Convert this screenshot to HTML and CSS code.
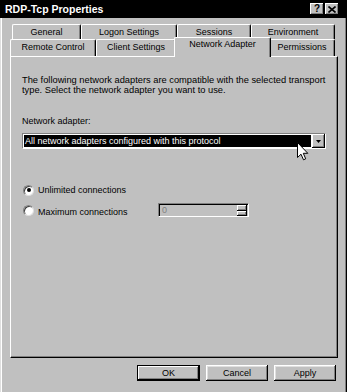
FILE: index.html
```html
<!DOCTYPE html>
<html>
<head>
<meta charset="utf-8">
<link rel="stylesheet" href="styles.css">
</head>
<body>
<div class="window">
  <div class="titlebar">
    <span class="title">RDP-Tcp Properties</span>
    <span class="tbtn help">?</span>
    <span class="tbtn close"><svg width="8" height="7" viewBox="0 0 8 7"><path d="M0.5 0.5 L7.5 6.5 M7.5 0.5 L0.5 6.5" stroke="#000" stroke-width="1.6"/></svg></span>
  </div>
  <div class="frame">
    <div class="tabs">
      <div class="tabrow back">
        <div class="tab t-general">General</div>
        <div class="tab t-logon">Logon Settings</div>
        <div class="tab t-sessions">Sessions</div>
        <div class="tab t-env">Environment</div>
      </div>
      <div class="tabrow front">
        <div class="tab t-remote">Remote Control</div>
        <div class="tab t-client">Client Settings</div>
        <div class="tab t-network active">Network Adapter</div>
        <div class="tab t-perm">Permissions</div>
      </div>
    </div>
    <div class="panel">
      <p class="desc">The following network adapters are compatible with the selected transport<br>type. Select the network adapter you want to use.</p>
      <div class="label">Network adapter:</div>
      <div class="combo">
        <div class="combo-field">All network adapters configured with this protocol</div>
        <div class="combo-btn"><svg width="5" height="3" viewBox="0 0 5 3"><path d="M0 0 H5 L2.5 3 Z" fill="#000"/></svg></div>
      </div>
      <div class="radios">
        <div class="radio-row">
          <span class="radio checked"></span>
          <span class="rlabel">Unlimited connections</span>
        </div>
        <div class="radio-row">
          <span class="radio"></span>
          <span class="rlabel low">Maximum connections</span>
          <div class="spin">
            <span class="spin-val">0</span>
            <span class="spin-btns">
              <span class="sbtn"></span>
              <span class="sbtn"></span>
            </span>
          </div>
        </div>
      </div>
    </div>
    <div class="buttons">
      <div class="btn default">OK</div>
      <div class="btn">Cancel</div>
      <div class="btn">Apply</div>
    </div>
  </div>
  <svg class="cursor" width="12" height="19" viewBox="0 0 12 19"><path d="M0.5 0.5 L0.5 15.5 L4 12.2 L6.5 17.8 L8.7 16.8 L6.3 11.3 L10.8 11.3 Z" fill="#fff" stroke="#000" stroke-width="1"/></svg>
</div>
</body>
</html>
```

FILE: styles.css
```css
* { box-sizing: border-box; }
html, body { margin: 0; padding: 0; }
body {
  width: 347px;
  height: 392px;
  overflow: hidden;
  background: #c0c0c0;
  font-family: "Liberation Sans", Arial, sans-serif;
  font-size: 9px;
  color: #000;
}
.window {
  position: relative;
  width: 347px;
  height: 392px;
  display: flex;
  flex-direction: column;
  background: #c0c0c0;
}
.titlebar {
  height: 18px;
  flex: none;
  background: #000;
  display: flex;
  align-items: center;
  padding: 0 8px 0 5px;
  gap: 1px;
}
.title {
  flex: 1;
  color: #fff;
  font-weight: bold;
  font-size: 10.5px;
  line-height: 12px;
}
.tbtn {
  width: 14px;
  height: 12px;
  background: #c0c0c0;
  box-shadow: inset -1px -1px #000, inset 1px 1px #fff, inset -2px -2px #808080;
  display: flex;
  align-items: center;
  justify-content: center;
  font-weight: bold;
  font-size: 10px;
  line-height: 10px;
}
.frame {
  flex: 1;
  display: flex;
  flex-direction: column;
  padding: 6px 9px 0 10px;
  box-shadow: inset 1px 0 #dfdfdf, inset 2px 0 #fff, inset -1px 0 #000, inset -2px 0 #808080;
}
.tabs {
  height: 32px;
  flex: none;
  display: flex;
  flex-direction: column;
}
.tabrow { display: flex; }
.tabrow.back { height: 15px; padding-left: 2px; }
.tabrow.front { height: 17px; }
.tab {
  flex: none;
  height: 100%;
  background: #c0c0c0;
  border-top: 1px solid #fff;
  border-left: 1px solid #fff;
  border-right: 1px solid #000;
  border-radius: 2px 2px 0 0;
  box-shadow: inset -1px 0 #808080;
  text-align: center;
  padding-top: 2px;
  line-height: 10px;
  white-space: nowrap;
}
.t-general { width: 69px; }
.t-logon { width: 96px; }
.t-sessions { width: 74px; }
.t-env { width: 84px; }
.t-remote { width: 86px; }
.t-client { width: 80px; }
.t-network { width: 93px; }
.t-perm { width: 66px; }
.tab.active {
  position: relative;
  z-index: 2;
  width: 97px;
  height: 20px;
  margin: -2px -2px 0 -2px;
  padding-top: 1px;
}
.panel {
  height: 302px;
  flex: none;
  border: 1px solid;
  border-color: #fff #000 #000 #fff;
  box-shadow: inset -1px -1px #808080;
  padding: 18px 0 0 11px;
}
.desc {
  margin: 0;
  font-size: 9.3px;
  line-height: 10px;
  white-space: nowrap;
}
.label {
  margin-top: 21px;
  line-height: 10px;
}
.combo {
  margin-top: 7px;
  width: 304px;
  height: 16px;
  display: flex;
  border: 1px solid;
  border-color: #808080 #fff #fff #808080;
}
.combo-field {
  flex: 1;
  background: #000;
  color: #fff;
  border: 1px solid #fff;
  padding: 1px 0 0 1px;
  line-height: 10px;
  white-space: nowrap;
  overflow: hidden;
}
.combo-btn {
  width: 13px;
  flex: none;
  background: #c0c0c0;
  box-shadow: inset -1px -1px #000, inset 1px 1px #fff, inset -2px -2px #808080;
  display: flex;
  align-items: center;
  justify-content: center;
}
.radios {
  margin-top: 34px;
  display: flex;
  flex-direction: column;
  gap: 6px;
}
.radio-row {
  display: grid;
  grid-template-columns: 16px 120px auto;
  height: 14px;
  align-items: center;
}
.radio {
  width: 11px;
  height: 11px;
  margin-left: 1px;
  border-radius: 50%;
  background: #fff;
  border: 1px solid;
  border-color: #808080 #dfdfdf #dfdfdf #808080;
  box-shadow: inset 1px 1px #404040;
  display: flex;
  align-items: center;
  justify-content: center;
}
.radio.checked::after {
  content: "";
  width: 4px;
  height: 4px;
  border-radius: 50%;
  background: #000;
}
.rlabel {
  line-height: 10px;
  white-space: nowrap;
}
.rlabel.low { align-self: end; }
.spin {
  width: 91px;
  height: 14px;
  display: flex;
  border: 1px solid;
  border-color: #808080 #fff #fff #808080;
  box-shadow: inset 1px 1px #000;
  background: #c0c0c0;
}
.spin-val {
  flex: 1;
  color: #808080;
  padding: 1px 0 0 3px;
  line-height: 11px;
}
.spin-btns {
  width: 10px;
  flex: none;
  margin: 1px 1px 0 0;
  display: flex;
  flex-direction: column;
}
.sbtn {
  height: 6px;
  background: #c0c0c0;
  box-shadow: inset -1px -1px #000, inset 1px 1px #fff, inset -2px -2px #808080;
}
.buttons {
  display: flex;
  justify-content: flex-end;
  gap: 6px;
  margin-top: 7px;
  padding-right: 2px;
}
.btn {
  width: 62px;
  height: 16px;
  background: #c0c0c0;
  box-shadow: inset -1px -1px #000, inset 1px 1px #fff, inset -2px -2px #808080, inset 2px 2px #dfdfdf;
  text-align: center;
  line-height: 16px;
}
.btn.default {
  width: 63px;
  box-shadow: inset 0 0 0 1px #000, inset -2px -2px #000, inset 2px 2px #fff, inset -3px -3px #808080;
}
.cursor {
  position: absolute;
  left: 297px;
  top: 142px;
}
```
